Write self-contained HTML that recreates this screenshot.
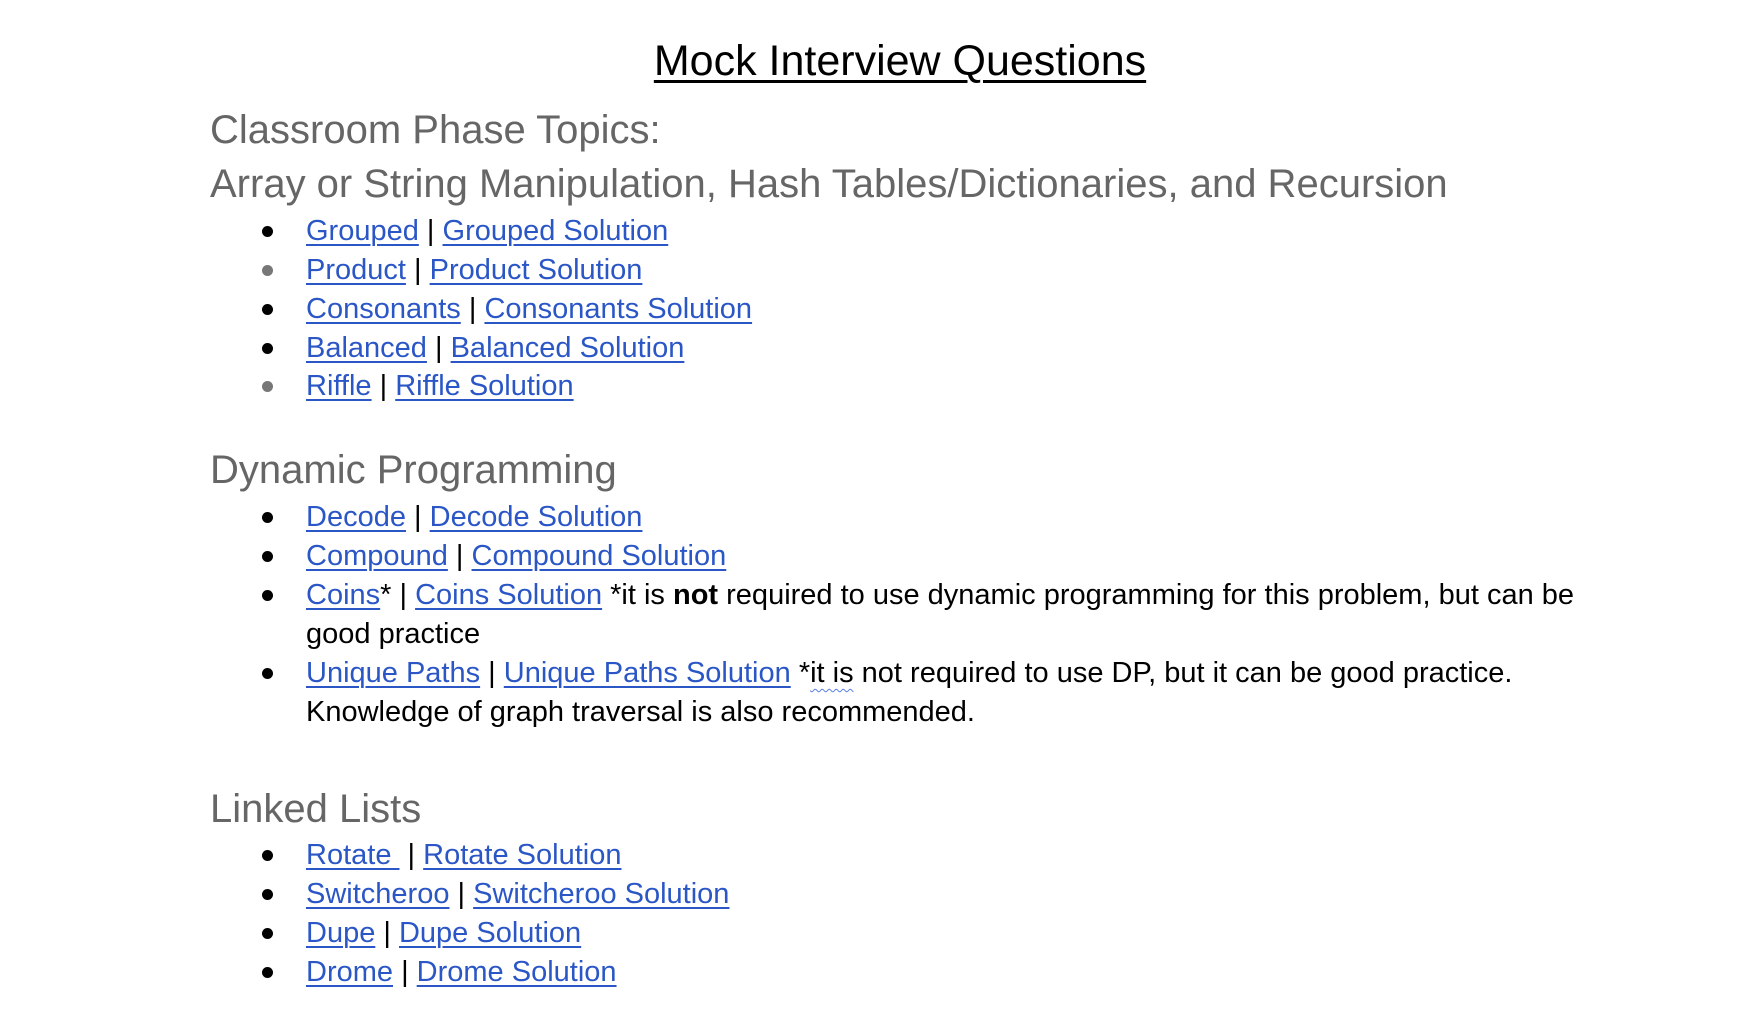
<!DOCTYPE html>
<html><head><meta charset="utf-8"><style>
html,body{margin:0;padding:0;background:#fff;width:1740px;height:1028px;overflow:hidden}
body{font-family:"Liberation Sans",Arial,sans-serif;position:relative}
.l{position:absolute;white-space:nowrap}
.t{left:0;width:1800px;text-align:center;font-size:43px;line-height:50px;text-decoration:underline;text-decoration-thickness:3px;text-underline-offset:5px;color:#000}
.h{left:210px;font-size:40px;line-height:50px;color:#666}
.b{left:306px;font-size:29px;line-height:40px;color:#000}
a{color:#2a56c6;text-decoration:underline;text-decoration-thickness:2px;text-underline-offset:4px}
.d{position:absolute;left:262px;width:11px;height:11px;border-radius:50%;background:#000}
.g{background:#777}
.w{text-decoration:underline wavy #5a7de0;text-decoration-thickness:1px;text-underline-offset:6px}
</style></head><body>
<div class="l t" style="top:36px">Mock Interview Questions</div>
<div class="l h" style="top:105px">Classroom Phase Topics:</div>
<div class="l h" style="top:159px">Array or String Manipulation, Hash Tables/Dictionaries, and Recursion</div>

<div class="d" style="top:226px"></div><div class="l b" style="top:211px"><a>Grouped</a> | <a>Grouped Solution</a></div>
<div class="d g" style="top:265px"></div><div class="l b" style="top:250px"><a>Product</a> | <a>Product Solution</a></div>
<div class="d" style="top:304px"></div><div class="l b" style="top:289px"><a>Consonants</a> | <a>Consonants Solution</a></div>
<div class="d" style="top:343px"></div><div class="l b" style="top:328px"><a>Balanced</a> | <a>Balanced Solution</a></div>
<div class="d g" style="top:381px"></div><div class="l b" style="top:366px"><a>Riffle</a> | <a>Riffle Solution</a></div>

<div class="l h" style="top:445px">Dynamic Programming</div>
<div class="d" style="top:512px"></div><div class="l b" style="top:497px"><a>Decode</a> | <a>Decode Solution</a></div>
<div class="d" style="top:551px"></div><div class="l b" style="top:536px"><a>Compound</a> | <a>Compound Solution</a></div>
<div class="d" style="top:590px"></div><div class="l b" style="top:575px"><a>Coins</a>* | <a>Coins Solution</a> *it is <b>not</b> required to use dynamic programming for this problem, but can be</div>
<div class="l b" style="top:614px">good practice</div>
<div class="d" style="top:668px"></div><div class="l b" style="top:653px"><a>Unique Paths</a> | <a>Unique Paths Solution</a> *<span class="w">it is</span> not required to use DP, but it can be good practice.</div>
<div class="l b" style="top:692px">Knowledge of graph traversal is also recommended.</div>

<div class="l h" style="top:784px">Linked Lists</div>
<div class="d" style="top:850px"></div><div class="l b" style="top:835px"><a>Rotate&nbsp;</a> | <a>Rotate Solution</a></div>
<div class="d" style="top:889px"></div><div class="l b" style="top:874px"><a>Switcheroo</a> | <a>Switcheroo Solution</a></div>
<div class="d" style="top:928px"></div><div class="l b" style="top:913px"><a>Dupe</a> | <a>Dupe Solution</a></div>
<div class="d" style="top:967px"></div><div class="l b" style="top:952px"><a>Drome</a> | <a>Drome Solution</a></div>
</body></html>
